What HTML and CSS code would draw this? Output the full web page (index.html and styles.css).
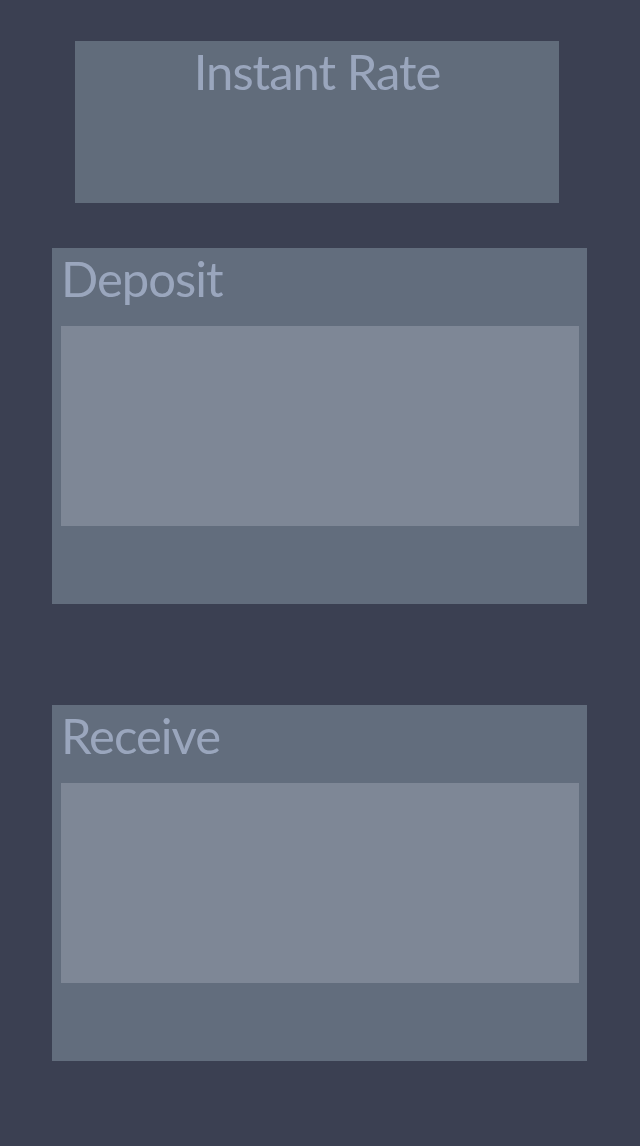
FILE: index.html
```html
<!DOCTYPE html>
<html lang="en">
<head>
<meta charset="utf-8">
<title>Exchange</title>
<link rel="stylesheet" href="styles.css">
</head>
<body>
<main class="page">
  <section class="rate">
    <h1 class="rate-title">Instant Rate</h1>
  </section>
  <section class="card card-deposit">
    <h2 class="card-label">Deposit</h2>
    <div class="card-field"></div>
  </section>
  <section class="card card-receive">
    <h2 class="card-label">Receive</h2>
    <div class="card-field"></div>
  </section>
</main>
</body>
</html>
```
FILE: styles.css
```css
html, body {
  margin: 0;
  padding: 0;
  background: #3b4052;
}
body {
  font-family: "Lato", "Noto Sans", sans-serif;
  color: #9aa6bd;
}
.page {
  display: flex;
  flex-direction: column;
  align-items: flex-start;
  padding-top: 41px;
  min-height: 1146px;
  box-sizing: border-box;
}
.rate {
  margin-left: 75px;
  width: 484px;
  height: 162px;
  background: #616c7b;
}
.rate-title {
  margin: 0;
  padding-top: 1px;
  font-size: 49px;
  font-weight: 400;
  letter-spacing: -1px;
  line-height: normal;
  text-align: center;
}
.card {
  margin-left: 52px;
  width: 535px;
  height: 356px;
  box-sizing: border-box;
  padding: 0 8px 0 9px;
  background: #626d7d;
  display: flex;
  flex-direction: column;
}
.card-deposit { margin-top: 45px; }
.card-receive { margin-top: 101px; }
.card-label {
  margin: 0;
  height: 78px;
  box-sizing: border-box;
  padding-top: 1px;
  font-size: 49px;
  font-weight: 400;
  letter-spacing: -1px;
  line-height: normal;
  white-space: nowrap;
}
.card-field {
  height: 200px;
  background: #7e8796;
}
```
